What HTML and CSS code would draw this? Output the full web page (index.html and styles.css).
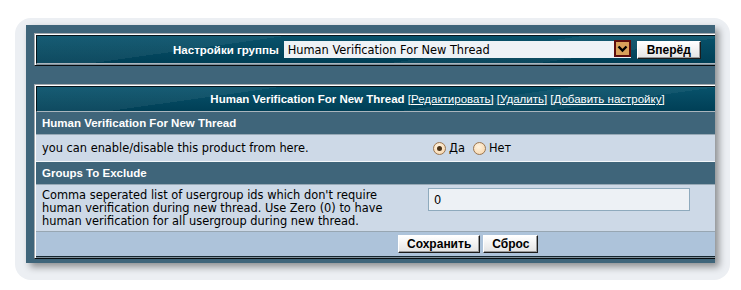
FILE: index.html
```html
<!DOCTYPE html>
<html lang="ru">
<head>
  <meta charset="UTF-8" />
  <title>Настройки группы</title>
  <link rel="stylesheet" href="styles.css">
</head>
<body>
  <div class="frame">
    <div class="panel">

      <div class="box">
        <form class="teal top-cell">
          <label class="strong">Настройки группы</label>
          <div class="select">
            <span>Human Verification For New Thread</span>
            <span class="arrow">
              <svg width="11" height="8" viewBox="0 0 11 8"><path d="M1.5 1.5 L5.5 5.5 L9.5 1.5" fill="none" stroke="#000" stroke-width="2.4"/></svg>
            </span>
          </div>
          <button type="button" class="btn">Вперёд</button>
        </form>
      </div>

      <div class="box box-main">
        <div class="teal head-main">
          <span><b>Human Verification For New Thread</b> <a href="#">[Редактировать]</a> <a href="#">[Удалить]</a> <a href="#">[Добавить настройку]</a></span>
        </div>

        <div class="section">Human Verification For New Thread</div>
        <div class="row alt">
          <div class="desc">you can enable/disable this product from here.</div>
          <div class="value">
            <label class="radio"><input type="radio" name="hv" checked /> Да</label>
            <label class="radio"><input type="radio" name="hv" /> Нет</label>
          </div>
        </div>

        <div class="section">Groups To Exclude</div>
        <div class="row alt tall">
          <div class="desc">Comma seperated list of usergroup ids which don't require human verification during new thread. Use Zero (0) to have human verification for all usergroup during new thread.</div>
          <div class="value">
            <input class="text" type="text" value="0" />
          </div>
        </div>

        <div class="footer">
          <button type="button" class="btn">Сохранить</button>
          <button type="button" class="btn">Сброс</button>
        </div>
      </div>

    </div>
  </div>
</body>
</html>
```
FILE: styles.css
```css
body {
  margin: 0;
  background: #fff;
  font-family: "DejaVu Sans", Verdana, sans-serif;
  font-size: 11.4px;
  color: #000;
}

/* outer rounded frame with the dropped panel */
.frame {
  width: 715px;
  height: 262px;
  margin: 18px 0 0 15px;
  padding: 7px 0 0 11px;
  box-sizing: border-box;
  background: #eceff3;
  border-radius: 16px;
}
.panel {
  width: 689px;
  height: 238px;
  box-sizing: border-box;
  padding: 8px 0 0 8px;
  background: #3f657a;
  overflow: hidden;
  box-shadow: 4px 4px 7px rgba(0, 0, 0, 0.4);
}

/* table-like boxes */
.box {
  width: 806px;
  box-sizing: border-box;
  border: 1px solid;
  border-color: #a4a9ae #070c10 #070c10 #a4a9ae;
  padding: 1px;
  box-shadow: inset 1px 1px 0 #fff, inset -1px -1px 0 #7d8e99;
}
.box + .box {
  margin-top: 18px;
}

.teal {
  color: #fff;
  background-color: #02465e;
  background-image:
    linear-gradient(172deg, rgba(255,255,255,0.06) 0 25%, rgba(255,255,255,0) 25% 55%, rgba(255,255,255,0.05) 55% 70%, rgba(255,255,255,0) 70%),
    linear-gradient(#08526b, #003f56);
  border: 1px solid;
  border-color: #05141b #aab5bd #aab5bd #05141b;
}

.strong {
  font-family: "Liberation Sans", Arial, sans-serif;
  font-weight: bold;
  font-size: 11.5px;
}

.top-cell {
  margin: 0;
  height: 27px;
  display: flex;
  align-items: center;
  justify-content: center;
}
.top-cell label {
  margin-right: 5px;
}

.select {
  width: 347px;
  height: 17px;
  box-sizing: border-box;
  display: flex;
  align-items: center;
  justify-content: space-between;
  background: #eef2f6;
  color: #000;
  padding-left: 4px;
  margin-right: 6px;
}
.arrow {
  width: 17px;
  height: 17px;
  box-sizing: border-box;
  display: flex;
  align-items: center;
  justify-content: center;
  background: #d9a05a;
  border: 2px solid #5c0c0c;
  margin-top: -2px;
}

.btn {
  height: 18px;
  padding: 0 9px;
  font-family: "Liberation Sans", Arial, sans-serif;
  font-weight: bold;
  font-size: 12px;
  color: #000;
  background: linear-gradient(#ffffff, #e4e4e4);
  border: 1px solid;
  border-color: #fff #1c1c1c #1c1c1c #fff;
  box-shadow: inset -1px -1px 0 #9a9a9a;
  cursor: pointer;
}

.head-main {
  height: 24px;
  border-right: 0;
  display: flex;
  align-items: center;
  justify-content: center;
  font-family: "Liberation Sans", Arial, sans-serif;
  font-size: 11.5px;
}
.head-main a {
  color: #fff;
}

.section {
  height: 22px;
  display: flex;
  align-items: center;
  padding-left: 6px;
  background: #3f657a;
  color: #fff;
  font-family: "Liberation Sans", Arial, sans-serif;
  font-weight: bold;
  font-size: 11.5px;
}

.row {
  display: flex;
}
.alt {
  background: #cdd9e7;
  border-top: 1px solid #97a9b6;
  border-bottom: 1px solid #f2f6f9;
  height: 26px;
  align-items: center;
}
.alt.tall {
  height: 46px;
  align-items: flex-start;
  border-bottom-color: #97a6b2;
}
.desc {
  width: 388px;
  box-sizing: border-box;
  padding: 0 24px 0 6px;
  line-height: 13px;
}
.tall .desc {
  padding-top: 4px;
}
.value {
  padding-left: 4px;
  display: flex;
  align-items: center;
}

.radio {
  display: flex;
  align-items: center;
  margin-right: 3px;
}
.radio input {
  appearance: none;
  width: 13px;
  height: 13px;
  margin: 0 3px 0 5px;
  border-radius: 50%;
  border: 1px solid #9b7650;
  background: radial-gradient(circle at 40% 35%, #fff3e0, #f6d2a4);
  display: flex;
  align-items: center;
  justify-content: center;
}
.radio input:checked::after {
  content: "";
  width: 5px;
  height: 5px;
  border-radius: 50%;
  background: #4a3218;
}

.text {
  width: 262px;
  height: 23px;
  box-sizing: border-box;
  margin-top: 3px;
  padding: 0 5px;
  font-family: "DejaVu Sans", Verdana, sans-serif;
  font-size: 11.4px;
  background: #edf1f5;
  border: 1px solid #8eaabd;
}

.footer {
  height: 24px;
  display: flex;
  align-items: center;
  gap: 3px;
  padding-left: 362px;
  background: #adc3da;
  border-bottom: 1px solid #14252e;
}
.footer .btn {
  padding: 0 8px;
}
```
